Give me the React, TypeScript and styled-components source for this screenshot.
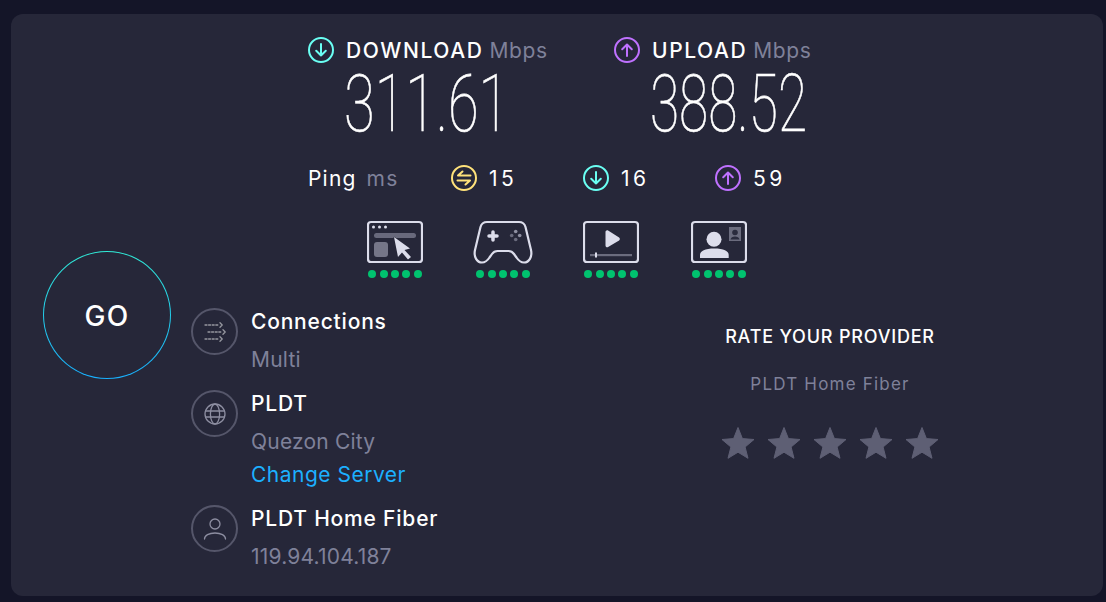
import React from "react";
import styled, { createGlobalStyle } from "styled-components";

const GlobalStyle = createGlobalStyle`
  html, body {
    margin: 0;
    padding: 0;
    background: #141528;
    font-family: "Inter", "Noto Sans", sans-serif;
  }
`;

const CYAN = "#6afff3";
const PURPLE = "#bf71ff";
const YELLOW = "#ffe27a";
const LINE = "#dcddeb";

const ArrowBadge = ({ color, up }: { color: string; up?: boolean }) => (
  <svg width="26" height="26" viewBox="0 0 26 26" fill="none" stroke={color} strokeWidth="2" strokeLinecap="round" strokeLinejoin="round">
    <circle cx="13" cy="13" r="12" />
    {up ? <path d="M13 19V7.5M8.2 12.2 13 7.5l4.8 4.7" /> : <path d="M13 7v11.5M8.2 13.8 13 18.5l4.8-4.7" />}
  </svg>
);

const PingBadge = () => (
  <svg width="26" height="26" viewBox="0 0 26 26" fill="none" stroke={YELLOW} strokeWidth="2" strokeLinecap="round" strokeLinejoin="round">
    <circle cx="13" cy="13" r="12" />
    <path d="M19.500 10.500H7L11.500 6.500M6.500 15.500H19L14.500 19.500" />
  </svg>
);

const WebIcon = () => (
  <svg width="56" height="44" viewBox="0 0 56 44" fill="none">
    <rect x="1" y="2" width="54" height="40" rx="3" stroke={LINE} strokeWidth="2.200" />
    <circle cx="6.500" cy="7" r="1.500" fill={LINE} />
    <circle cx="12.500" cy="7" r="1.500" fill={LINE} />
    <circle cx="18.500" cy="7" r="1.500" fill={LINE} />
    <rect x="7" y="13" width="42" height="5" rx="2.500" fill="#68697c" />
    <rect x="7" y="22" width="14" height="15" rx="3" fill="#757688" />
    <path d="M27 17 43 28.500l-5.500 1.500 6.500 7-3 2.500-6-7-4 4.500z" fill={LINE} stroke="#262739" strokeWidth="1" paintOrder="stroke" />
  </svg>
);

const GameIcon = () => (
  <svg width="60" height="44" viewBox="0 0 60 44" fill="none">
    <path
      d="M14 2H46C49.500 2 51.500 3.500 52.500 7L58 30C59.500 37 56 42.500 51 42.500C47.500 42.500 45.500 40.500 43.500 37.500L41 34C39.500 31.800 38 31 35.500 31H24.500C22 31 20.500 31.800 19 34L16.500 37.500C14.500 40.500 12.500 42.500 9 42.500C4 42.500 .5 37 2 30L7.500 7C8.500 3.500 10.500 2 14 2Z"
      stroke={LINE}
      strokeWidth="2.200"
      strokeLinejoin="round"
    />
    <path d="M20 12v8M16 16h8" stroke={LINE} strokeWidth="3.500" strokeLinecap="round" />
    <circle cx="42.700" cy="11.500" r="1.800" fill="#8f90a2" />
    <circle cx="46.700" cy="15.500" r="1.800" fill="#8f90a2" />
    <circle cx="38.700" cy="15.500" r="1.800" fill="#6b6c7e" />
    <circle cx="42.700" cy="19.500" r="1.800" fill="#6b6c7e" />
  </svg>
);

const VideoIcon = () => (
  <svg width="56" height="44" viewBox="0 0 56 44" fill="none">
    <rect x="1" y="2" width="54" height="40" rx="3" stroke={LINE} strokeWidth="2.200" />
    <path d="M22.500 12c0-1.500 1.400-2.300 2.600-1.600l11 7.100c1 .7 1 2.200 0 2.900l-11 6.700c-1.200.7-2.600-.1-2.600-1.600z" fill={LINE} />
    <rect x="7" y="34" width="42" height="2.200" fill="#6b6c7e" />
    <rect x="12" y="32.500" width="2" height="5" fill={LINE} />
  </svg>
);

const ChatIcon = () => (
  <svg width="56" height="44" viewBox="0 0 56 44" fill="none">
    <rect x="1" y="2" width="54" height="40" rx="3" stroke={LINE} strokeWidth="2.200" />
    <circle cx="23" cy="19.300" r="7.500" fill={LINE} />
    <path d="M9 38v-3c0-4 5-6.500 14.300-6.500S37.700 31 37.700 35v3z" fill={LINE} />
    <rect x="38" y="7" width="12" height="14" fill="#6b6c7e" />
    <circle cx="44" cy="12.500" r="2.800" fill="#2a2b3d" />
    <path d="M39.500 19.500c.4-2 2-3 4.500-3s4.100 1 4.500 3z" fill="#2a2b3d" />
  </svg>
);

const ConnectionsIcon = () => (
  <svg width="22" height="20" viewBox="0 0 22 20" fill="none" stroke="#96979f" strokeWidth="1.300" strokeLinecap="round" strokeLinejoin="round">
    <path d="M1 3h14" strokeDasharray="2 1.600" />
    <path d="M16 .8 18.200 3 16 5.200" />
    <path d="M4 10h14" strokeDasharray="2 1.600" />
    <path d="M19 7.800 21.200 10 19 12.200" />
    <path d="M1 17h14" strokeDasharray="2 1.600" />
    <path d="M16 14.800 18.200 17 16 19.200" />
  </svg>
);

const GlobeIcon = () => (
  <svg width="22" height="22" viewBox="0 0 22 22" fill="none" stroke="#8d8ea1" strokeWidth="1.300">
    <circle cx="11" cy="11" r="10" />
    <ellipse cx="11" cy="11" rx="4.600" ry="10" />
    <path d="M1 8h20M1 14h20" />
  </svg>
);

const UserIcon = () => (
  <svg width="24" height="22" viewBox="0 0 24 22" fill="none" stroke="#8d8ea1" strokeWidth="1.300" strokeLinecap="round">
    <circle cx="12" cy="6" r="5" />
    <path d="M1.500 21c0-3.500 4.500-6 10.500-6s10.500 2.500 10.500 6" />
  </svg>
);

const StarIcon = () => (
  <svg width="34" height="34" viewBox="0 0 34 34">
    <path
      d="M17 1.500 21.400 12.600 33 13.500 24.100 21 27 32.300 17 26.200 7 32.300 9.900 21 1 13.500 12.600 12.600z"
      fill="#5e5f74"
      stroke="#5e5f74"
      strokeWidth="1"
      strokeLinejoin="round"
    />
  </svg>
);

const Page = styled.div`
  box-sizing: border-box;
  width: 1106px;
  height: 602px;
  padding: 14px 3px 6px 11px;
  overflow: hidden;
`;

const Panel = styled.div`
  height: 582px;
  display: flex;
  background: #262739;
  border-radius: 12px;
  padding-left: 32px;
  gap: 20px;
  color: #fff;
`;

const GoColumn = styled.div`
  padding-top: 237px;
`;

const GoButton = styled.div`
  width: 128px;
  height: 128px;
  border-radius: 50%;
  box-sizing: border-box;
  display: flex;
  align-items: center;
  justify-content: center;
  padding-top: 2px;
  font-size: 28px;
  font-weight: 500;
  letter-spacing: 1.200px;
  border: 1.500px solid transparent;
  background:
    linear-gradient(#262739, #262739) padding-box,
    linear-gradient(#30ecd8, #18b0ff) border-box;
`;

const Main = styled.div`
  flex: 1;
  padding-top: 22px;
`;

const Top = styled.div`
  padding-left: 117px;
`;

const SpeedRow = styled.div`
  display: flex;
`;

const Speed = styled.div`
  width: 306px;
`;

const SpeedHead = styled.div`
  display: flex;
  align-items: center;
  gap: 12px;
  height: 28px;
  font-size: 21px;
  font-weight: 500;
  letter-spacing: 1.600px;
  white-space: nowrap;
`;

const Unit = styled.span`
  color: #7f8199;
  font-weight: 400;
  letter-spacing: 0.600px;
  margin-left: 6px;
`;

const SpeedValue = styled.div<{ $squeeze: number }>`
  height: 64px;
  margin-top: 8px;
  margin-left: 36px;
  font-family: "Roboto", sans-serif;
  font-weight: 100;
  font-size: 80px;
  line-height: 64px;
  -webkit-text-stroke: 0.600px #fff;
  transform: scaleX(${(p) => p.$squeeze});
  transform-origin: left center;
  white-space: nowrap;
`;

const PingRow = styled.div`
  display: flex;
  align-items: center;
  height: 28px;
  margin-top: 28px;
  font-size: 21px;
  letter-spacing: 1.200px;
`;

const PingLabel = styled.div`
  width: 143px;
  white-space: nowrap;
`;

const PingUnit = styled.span`
  color: #7f8199;
  margin-left: 10px;
`;

const PingStat = styled.div`
  width: 132px;
  display: flex;
  align-items: center;
  gap: 12px;
  letter-spacing: 3.500px;
`;

const Apps = styled.div`
  display: flex;
  gap: 52px;
  margin-top: 28px;
  margin-left: 59px;
`;

const AppItem = styled.div`
  width: 56px;
  display: flex;
  flex-direction: column;
  align-items: center;
  height: 58px;
  justify-content: space-between;
`;

const IconSlot = styled.div`
  height: 44px;
  display: flex;
  justify-content: center;
`;

const Dots = styled.div`
  display: flex;
  gap: 3.300px;
`;

const Dot = styled.span`
  width: 8px;
  height: 8px;
  border-radius: 50%;
  background: #00c26f;
`;

const Bottom = styled.div`
  display: flex;
  margin-top: 30px;
`;

const Details = styled.div`
  width: 420px;
  display: flex;
  flex-direction: column;
  gap: 16px;
`;

const DetailRow = styled.div`
  display: flex;
  gap: 13px;
`;

const RoundIcon = styled.div`
  box-sizing: border-box;
  width: 47px;
  height: 47px;
  border-radius: 50%;
  border: 2px solid #55566a;
  display: flex;
  align-items: center;
  justify-content: center;
`;

const DetailText = styled.div`
  display: flex;
  flex-direction: column;
`;

const DetailTitle = styled.div`
  font-size: 21px;
  font-weight: 500;
  letter-spacing: 0.800px;
  line-height: 28px;
  margin-bottom: 10px;
`;

const DetailSub = styled.div`
  font-size: 21px;
  letter-spacing: 0.200px;
  line-height: 28px;
  color: #7f8199;
`;

const ChangeLink = styled.a`
  font-size: 21px;
  letter-spacing: 0.500px;
  line-height: 28px;
  margin-top: 5px;
  color: #1cb0ff;
`;

const Rate = styled.div`
  width: 438px;
  padding-top: 15px;
  display: flex;
  flex-direction: column;
  align-items: center;
`;

const RateTitle = styled.div`
  font-size: 18px;
  font-weight: 500;
  letter-spacing: 0.800px;
  line-height: 28px;
`;

const RateSub = styled.div`
  font-size: 17px;
  letter-spacing: 1.200px;
  line-height: 28px;
  margin-top: 19px;
  color: #7f8199;
`;

const Stars = styled.div`
  display: flex;
  gap: 12px;
  margin-top: 28px;
`;

const apps = [<WebIcon />, <GameIcon />, <VideoIcon />, <ChatIcon />];

export default function App() {
  return (
    <Page>
      <GlobalStyle />
      <Panel>
        <GoColumn>
          <GoButton>GO</GoButton>
        </GoColumn>
        <Main>
          <Top>
            <SpeedRow>
              <Speed>
                <SpeedHead>
                  <ArrowBadge color={CYAN} />
                  <span>
                    DOWNLOAD<Unit>Mbps</Unit>
                  </span>
                </SpeedHead>
                <SpeedValue $squeeze={0.7}>311.61</SpeedValue>
              </Speed>
              <Speed>
                <SpeedHead>
                  <ArrowBadge color={PURPLE} up />
                  <span>
                    UPLOAD<Unit>Mbps</Unit>
                  </span>
                </SpeedHead>
                <SpeedValue $squeeze={0.665}>388.52</SpeedValue>
              </Speed>
            </SpeedRow>
            <PingRow>
              <PingLabel>
                Ping<PingUnit>ms</PingUnit>
              </PingLabel>
              <PingStat>
                <PingBadge />
                15
              </PingStat>
              <PingStat>
                <ArrowBadge color={CYAN} />
                16
              </PingStat>
              <PingStat>
                <ArrowBadge color={PURPLE} up />
                59
              </PingStat>
            </PingRow>
            <Apps>
              {apps.map((icon, i) => (
                <AppItem key={i}>
                  <IconSlot>{icon}</IconSlot>
                  <Dots>
                    {[0, 1, 2, 3, 4].map((d) => (
                      <Dot key={d} />
                    ))}
                  </Dots>
                </AppItem>
              ))}
            </Apps>
          </Top>
          <Bottom>
            <Details>
              <DetailRow>
                <RoundIcon>
                  <ConnectionsIcon />
                </RoundIcon>
                <DetailText>
                  <DetailTitle>Connections</DetailTitle>
                  <DetailSub>Multi</DetailSub>
                </DetailText>
              </DetailRow>
              <DetailRow>
                <RoundIcon>
                  <GlobeIcon />
                </RoundIcon>
                <DetailText>
                  <DetailTitle>PLDT</DetailTitle>
                  <DetailSub>Quezon City</DetailSub>
                  <ChangeLink>Change Server</ChangeLink>
                </DetailText>
              </DetailRow>
              <DetailRow>
                <RoundIcon>
                  <UserIcon />
                </RoundIcon>
                <DetailText>
                  <DetailTitle>PLDT Home Fiber</DetailTitle>
                  <DetailSub>119.94.104.187</DetailSub>
                </DetailText>
              </DetailRow>
            </Details>
            <Rate>
              <RateTitle>RATE YOUR PROVIDER</RateTitle>
              <RateSub>PLDT Home Fiber</RateSub>
              <Stars>
                {[0, 1, 2, 3, 4].map((s) => (
                  <StarIcon key={s} />
                ))}
              </Stars>
            </Rate>
          </Bottom>
        </Main>
      </Panel>
    </Page>
  );
}
